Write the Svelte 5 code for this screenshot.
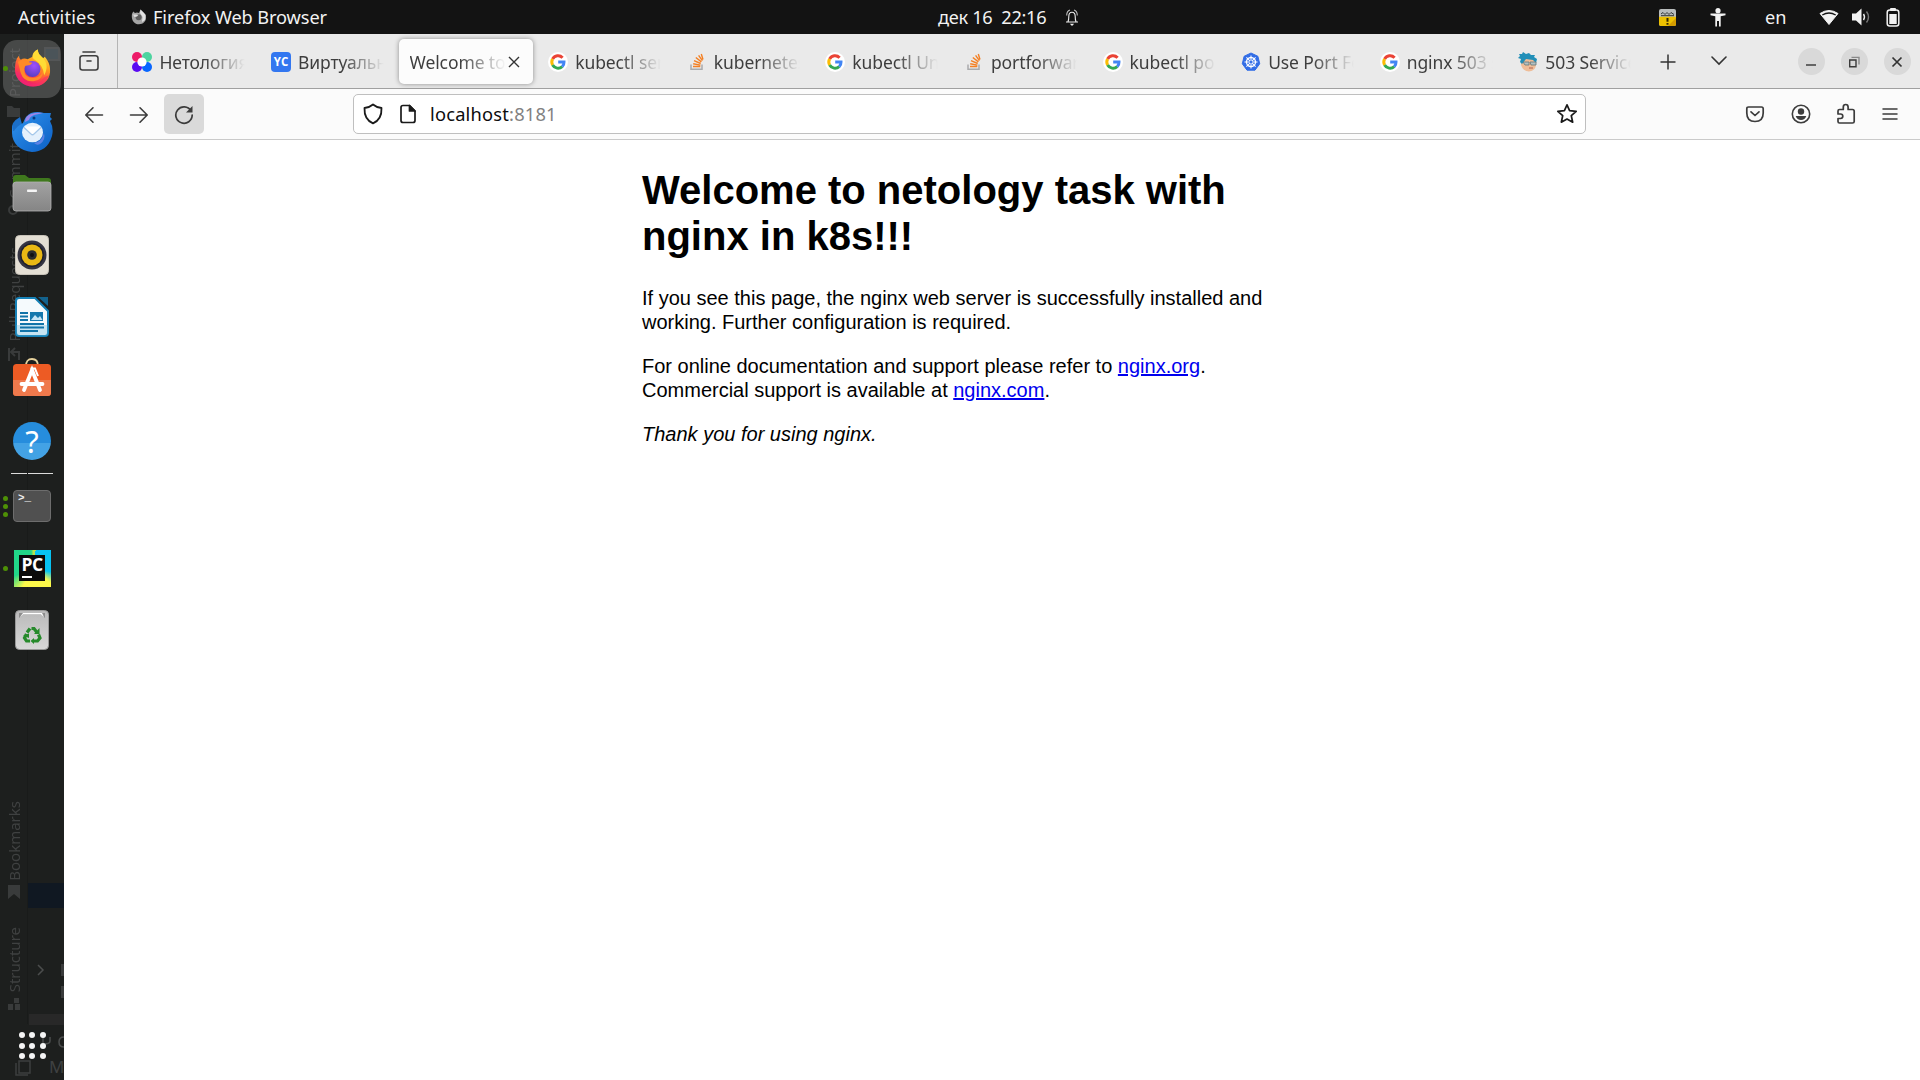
<script>
  const tabs = [
    { kind: 'netology', title: 'Нетология' },
    { kind: 'yc', title: 'Виртуальные' },
    { kind: 'active', title: 'Welcome to n' },
    { kind: 'google', title: 'kubectl serv' },
    { kind: 'stack', title: 'kubernetes' },
    { kind: 'google', title: 'kubectl Una' },
    { kind: 'stack', title: 'portforward' },
    { kind: 'google', title: 'kubectl port' },
    { kind: 'k8s', title: 'Use Port Fo' },
    { kind: 'google', title: 'nginx 503 s' },
    { kind: 'face', title: '503 Service' }
  ];
  const spokes = [0, 45, 90, 135, 180, 225, 270, 315];
  const dots = [0, 1, 2, 3, 4, 5, 6, 7, 8];
</script>

<div class="desktop">
  <header class="topbar">
    <span class="activities">Activities</span>
    <svg class="ff-mini" width="16" height="16" viewBox="0 0 16 16">
      <path d="M1 5 2.2 2.5 4 4 6 3.5 8 4 9.5.5 12.5 3.5 14.5 5.5C16.5 11 13 15.3 8 15.3S0 11 1 5Z" fill="#a5a5a5" />
      <path d="M9.5.5 12.5 3.5 14.5 6 14 11 11 13 11.5 8 9 4Z" fill="#e2e2e2" />
      <circle cx="7.6" cy="8.2" r="3" fill="#5d5d5d" />
      <path d="M2 5.5 7.5 5.7 6 7.4 3.5 8Z" fill="#ddd" />
    </svg>
    <span class="appname">Firefox Web Browser</span>
    <span class="clock">дек 16&nbsp; 22:16</span>
    <svg class="bell" width="12" height="17" viewBox="0 0 12 17" fill="none" stroke="#eee" stroke-width="1.1">
      <path d="M0 13H12M2 12.800Q2.800 11 2.800 7.500 2.800 3.200 6 3.200T9.200 7.500Q9.200 11 10 12.800" />
      <path d="M4 1Q.7 2 .7 6.500M8 1Q11.300 2 11.300 6.500" stroke="#bbb" />
      <path d="M4 14.800H8L6.800 16.500H5.200Z" fill="#eee" stroke="none" />
    </svg>
    <svg class="alert" width="17" height="17" viewBox="0 0 17 17">
      <rect width="17" height="17" rx="2" fill="#b8bcbc" />
      <path d="M2 5 4 3.500 6 5.500 8 3.500 10 5.500 12 3.500 15 5.500M2 6.700H15" stroke="#343838" fill="none" />
      <path d="M0 7.800H17V15Q17 17 15 17H2Q0 17 0 15Z" fill="#edc000" />
      <path d="M9 17 17 9V15Q17 17 15 17Z" fill="#d39b00" />
      <path d="M8.500 9V12.800M8.500 14V15.800" stroke="#332900" stroke-width="2" />
    </svg>
    <svg class="person" width="16" height="19" viewBox="0 0 16 19" fill="#f2f2f2">
      <circle cx="8" cy="2.700" r="2.600" />
      <path d="M.5 5.600H15.500V7.300L10.700 8.200V18.500H9V13H7V18.500H5.300V8.200L.5 7.300Z" />
    </svg>
    <span class="lang">en</span>
    <svg class="wifi" width="20" height="17" viewBox="0 0 20 17">
      <path d="M1 4.500Q10-1.500 19 4.500L10 15.500Z" fill="#f2f2f2" stroke="#f2f2f2" stroke-linejoin="round" />
      <path d="M3.300 6Q10 2 16.700 6" stroke="#131313" stroke-width="1.300" fill="none" />
    </svg>
    <svg class="volume" width="19" height="18" viewBox="0 0 19 18">
      <path d="M0 5.500H4L9.500.5V17.500L4 12.500H0Z" fill="#f2f2f2" />
      <path d="M11.500 6Q13.500 9 11.500 12" fill="none" stroke="#eee" stroke-width="1.400" />
      <path d="M14.500 3.500Q18.500 9 14.500 14.500" fill="none" stroke="#777" stroke-width="1.400" />
    </svg>
    <svg class="battery" width="14" height="19" viewBox="0 0 14 19">
      <rect x="4" y="0" width="6" height="3" rx="1" fill="#f2f2f2" />
      <rect x="1.200" y="2" width="11.600" height="16" rx="2.500" fill="none" stroke="#f2f2f2" stroke-width="1.500" />
      <rect x="3.300" y="6" width="7.400" height="10" fill="#f2f2f2" />
    </svg>
  </header>

  <div class="main">
    <aside class="dock">
      <div class="ghost">
        <i class="g-line"></i><i class="g-sel"></i><i class="g-row"></i><i class="g-tool"></i>
        <span class="g project">Project</span>
        <span class="g commit">Commit</span>
        <span class="g pull">Pull Requests</span>
        <span class="g books">Bookmarks</span>
        <span class="g struct">Structure</span>
        <span class="g-main">M</span>
        <svg class="g-svg" width="64" height="1046" viewBox="0 34 64 1046" fill="#393b3b">
          <path d="M7 106H12L14 108H20V117H7Z" />
          <circle cx="13" cy="210" r="4" fill="none" stroke="#393b3b" stroke-width="2" />
          <path d="M9 348V361M19 360V352H12M15 348 11 352 15 356" fill="none" stroke="#393b3b" stroke-width="2" />
          <path d="M8 885H20V899L14 894 8 899Z" />
          <path d="M8 1004H13V1010H8ZM15 1004H20V1010H15ZM14 998H19V1003H14Z" />
          <path d="M38 965 43 970 38 975" fill="none" stroke="#4b4d4d" stroke-width="1.500" />
          <path d="M61 964H64V976H61ZM61 986H64V998H61Z" />
          <path d="M19 1061H30V1073H19ZM16 1063V1075H28" fill="none" stroke="#3d3f3f" stroke-width="1.500" />
          <path d="M43 1037V1046M50 1037V1041Q50 1044 44 1044M64 1037Q59 1037 59 1042T64 1047" fill="none" stroke="#4b4d4d" stroke-width="1.500" />
        </svg>
      </div>

      <div class="item first">
        <div class="focus"></div>
        <div class="run"><b></b></div>
        <svg width="37" height="39" viewBox="0 0 38 40">
          <defs>
            <linearGradient id="fxA" x1=".85" y1="0" x2=".3" y2="1">
              <stop offset="0" stop-color="#fff044" /><stop offset=".4" stop-color="#ff9a1e" /><stop offset=".7" stop-color="#ff4545" /><stop offset="1" stop-color="#e6107c" />
            </linearGradient>
            <radialGradient id="fxB" cx=".6" cy=".3" r=".7">
              <stop offset="0" stop-color="#a04fff" /><stop offset="1" stop-color="#5a3fc0" />
            </radialGradient>
          </defs>
          <path d="M5 7C5 9 6 10 7 11Q10 9 14 10.500L19 8C19 4.500 21 2 24.500.5 24.500 5 27 6.500 30 9.500L31.500 8C36 13 37.500 18 37 24 36 33 28.500 38.500 19.500 38.500 9.500 38.500 1.500 31 1 21.500 1 15 2 10 5 7Z" fill="url(#fxA)" />
          <path d="M19 8C19 4.500 21 2 24.500.5 24.500 5 27 6.500 30 9.500 34 14 35 20 31 27Q30 16 20 10Z" fill="#ffdc35" />
          <circle cx="19" cy="20.500" r="8.200" fill="url(#fxB)" />
          <path d="M4 13Q8 10 12 12T19 14Q17 17 13.500 17T10.500 22Q11 29 19 29.500T30 22Q30 32 20 33T7 25Z" fill="#ff8a27" />
          <path d="M7 25Q7 32 15 35 24 38 31 29L36 27C34 34 28 38.500 19.500 38.500 9 38.500 2 31 1 22Z" fill="#f5296f" opacity=".55" />
        </svg>
      </div>
      <div class="item tbird">
        <svg width="42" height="42" viewBox="0 0 42 42">
          <defs><linearGradient id="tb" x1="0" y1="0" x2="1" y2="1"><stop offset="0" stop-color="#2f93ee" /><stop offset="1" stop-color="#0c5fc4" /></linearGradient></defs>
          <path d="M9 6 11 13 5 22 1 18Q0 11 9 6Z" fill="#1b6fc9" />
          <path d="M1 13Q1 18 3 20Q6 15 12 12Q15 4 20 2Q26 0 33 2L40 2 39 6 41 8 39 10Q43 17 41 25C38 36 30 41 21 41 9 40 1 32 1 22Z" fill="url(#tb)" />
          <path d="M14 11Q14 5 20 3T32 2L28 3Q19 4 18 9Z" fill="#9a84e8" />
          <circle cx="23" cy="7" r="1.500" fill="#093a80" />
          <ellipse cx="21.500" cy="21.500" rx="10.500" ry="9.800" fill="#e4f0fc" />
          <path d="M13 15.500H30L23 23Q21.500 24.500 20 23Z" fill="#fff" />
          <path d="M12.500 16 20 23Q21.500 24.500 23 23L30.500 16" fill="none" stroke="#a6c8ea" stroke-width="1.200" />
          <path d="M23 32Q31 31 33 22 35 29 29 33 26 35 23 32Z" fill="#7a8aec" opacity=".7" />
        </svg>
      </div>
      <div class="item">
        <svg width="40" height="38" viewBox="0 0 40 38">
          <defs><linearGradient id="fl" x2="0" y2="1"><stop stop-color="#a2a2a2" /><stop offset="1" stop-color="#858585" /></linearGradient></defs>
          <path d="M1 12V4Q1 1 4 1H13L17 4H36Q39 4 39 7V14H1Z" fill="#3f781d" />
          <rect x="1" y="8" width="38" height="29" rx="3" fill="url(#fl)" stroke="#b2b2b2" stroke-width=".8" />
          <rect x="15" y="15.500" width="10" height="2.600" rx=".8" fill="#f5f5f5" />
        </svg>
      </div>
      <div class="item">
        <svg width="34" height="40" viewBox="0 0 34 40">
          <rect x=".5" y=".5" width="33" height="39" rx="4" fill="#e4dfd4" stroke="#c8c3b9" />
          <circle cx="17" cy="20" r="14.500" fill="#343442" /><circle cx="17" cy="20" r="12" fill="#20202c" />
          <circle cx="17" cy="20" r="10.500" fill="#eab814" /><circle cx="17" cy="20" r="4.800" fill="#292b2d" /><circle cx="17" cy="20" r="2" fill="#101010" />
        </svg>
      </div>
      <div class="item">
        <svg width="34" height="40" viewBox="0 0 34 40">
          <path d="M4 1H20L33 14V36Q33 39 30 39H4Q1 39 1 36V4Q1 1 4 1Z" fill="#f5fafd" stroke="#1681b7" stroke-width="2" />
          <path d="M1 28H33V36Q33 39 30 39H4Q1 39 1 36Z" fill="#5bb3db" opacity=".3" />
          <path d="M23 0H33V9Z" fill="#13628d" />
          <path d="M5 16H13M5 19.500H13M5 23H13M5 27H29M5 30.500H29M5 34H23" stroke="#1174a9" stroke-width="1.900" />
          <rect x="15" y="15" width="13" height="9" fill="#1678ad" /><path d="M16 23 20 18 23 21 25 19 27.500 23Z" fill="#c6e5f5" />
        </svg>
      </div>
      <div class="item soft">
        <svg width="40" height="40" viewBox="0 0 40 40">
          <path d="M14 9Q14 2 20 2T26 9" fill="none" stroke="#e6d29d" stroke-width="1.800" />
          <rect x="1" y="7" width="38" height="32" rx="3.500" fill="#ed5b24" /><path d="M1 23H39V35.500Q39 39 35.500 39H4.500Q1 39 1 35.500Z" fill="#ef794c" />
          <path d="M12 33 20 13 28 33M9.500 27H30.500" stroke="#fff" stroke-width="3.800" stroke-linecap="round" fill="none" />
          <path d="M18.500 11.500H23L26 19" stroke="#fff" stroke-width="2" fill="none" />
        </svg>
      </div>
      <div class="item">
        <div class="help">?</div>
      </div>
      <div class="rule"></div>
      <div class="item">
        <div class="run"><b></b><b></b><b></b></div>
        <div class="term"><span>&gt;_</span></div>
      </div>
      <div class="item">
        <div class="run"><b></b></div>
        <div class="pycharm"><div>PC<i></i></div></div>
      </div>
      <div class="item">
        <svg width="34" height="40" viewBox="0 0 34 40">
          <defs><linearGradient id="tr" x2="0" y2="1"><stop stop-color="#b9b9b9" /><stop offset="1" stop-color="#d8d8d8" /></linearGradient></defs>
          <rect x=".5" y=".5" width="33" height="39" rx="4" fill="url(#tr)" stroke="#999" />
          <path d="M4 8V3H30V8L27 5H7Z" fill="#8c8c8c" /><path d="M5 7 8 3H27L29 7 26 4.500H8Z" fill="#fff" />
          <g fill="none" stroke="#268a2b" stroke-width="3.200">
            <path d="M12 22.500 15 18.500H19L22 22.500" stroke-dasharray="5 1.500 8" /><path d="M23.500 24.500 25 28 22.500 31H18" /><path d="M15 31H11.500L9.500 28 11.500 24" />
          </g>
          <path d="M19 28V34L15.500 31ZM8 25.500 14 23.500V28ZM24.500 18V24H19Z" fill="#268a2b" />
        </svg>
      </div>
      <div class="apps">{#each dots as d (d)}<i></i>{/each}</div>
    </aside>

    <section class="browser">
      <div class="tabbar">
        <div class="view">
          <svg width="20" height="20" viewBox="0 0 20 20" fill="none" stroke="#3e3e3e" stroke-width="1.600" stroke-linecap="round">
            <path d="M4 1H16" />
            <rect x="1" y="4.800" width="18" height="14.200" rx="2.500" /><path d="M8 10H12" />
          </svg>
        </div>
        <div class="tabs">
          {#each tabs as tab, i (i)}
            <div class="tab" class:active={tab.kind === 'active'}>
              {#if tab.kind === 'netology'}
                <svg class="fav" width="20" height="20" viewBox="0 0 20 20">
                  <circle cx="5" cy="5" r="5" fill="#ed1b68" /><circle cx="15" cy="5" r="5" fill="#4dd4a0" /><circle cx="5" cy="15" r="5" fill="#5b0cf2" /><circle cx="15" cy="15" r="5" fill="#0866ff" />
                  <circle cx="10" cy="10" r="4.600" fill="#fff" />
                </svg>
              {:else if tab.kind === 'yc'}
                <span class="fav yc">YC</span>
              {:else if tab.kind === 'google'}
                <svg class="fav" width="20" height="20" viewBox="0 0 20 20">
                  <circle cx="10" cy="10" r="10" fill="#fff" />
                  <g fill="none" stroke-width="3">
                    <path d="M14.600 5.700A6.200 6.200 0 0 0 4.600 7" stroke="#ea4335" /><path d="M4.600 7A6.200 6.200 0 0 0 4.600 13" stroke="#fbbc05" />
                    <path d="M4.600 13A6.200 6.200 0 0 0 14.200 14.600" stroke="#34a853" /><path d="M14.200 14.600A6.200 6.200 0 0 0 16 10H10.200" stroke="#4285f4" />
                  </g>
                </svg>
              {:else if tab.kind === 'stack'}
                <svg class="fav" width="20" height="20" viewBox="0 0 20 20" fill="none">
                  <path d="M4 12.500V17.300H15V12.500" stroke="#aaabad" stroke-width="1.500" />
                  <path d="M6 14.500H13.300M6.200 11.700 13.400 13.100M7 8.600 13.700 11.500M8.800 5.500 14.400 9.900M11.600 3.300 15.400 8.700M14.300 2 16 7.500" stroke="#f48024" stroke-width="1.400" />
                </svg>
              {:else if tab.kind === 'k8s'}
                <svg class="fav" width="20" height="20" viewBox="0 0 20 20">
                  <path d="M10 1 16.900 4.300 18.700 11.800 14 18.200H6L1.300 11.800 3.100 4.300Z" fill="#326de6" stroke="#326de6" stroke-linejoin="round" />
                  <circle cx="10" cy="10" r="4.500" stroke="#fff" stroke-width="1.300" fill="none" />
                  {#each spokes as a (a)}<path d="M10 8.800V3.500" transform="rotate({a} 10 10)" stroke="#fff" />{/each}
                </svg>
              {:else if tab.kind === 'face'}
                <svg class="fav" width="20" height="20" viewBox="0 0 20 20">
                  <path d="M3 7Q4 2 13 5 19 6 18 12 18 19 11 19.500 5 19 3 13Z" fill="#efbd98" />
                  <path d="M1 2 4 2 5 0 8 2 11 1 13 3 17 3 16 5 19 7 18 11 15 8 8 7 4 12 2 10 3 7 0 6 2 4Z" fill="#218fb8" />
                  <path d="M5 10H11V13H7ZM12 10H18V13H13Z" fill="#b3c0c1" stroke="#64777a" stroke-width=".8" />
                  <path d="M11 16H15" stroke="#b2614e" />
                </svg>
              {/if}
              <span class="title">{tab.title}</span>
              {#if tab.kind === 'active'}
                <svg class="close" width="12" height="12" viewBox="0 0 12 12" stroke="#333" stroke-width="1.400"><path d="M1 1 11 11M11 1 1 11" /></svg>
              {/if}
            </div>
          {/each}
        </div>
        <svg class="plus" width="16" height="16" viewBox="0 0 16 16" stroke="#333" stroke-width="1.500"><path d="M8 .5V15.500M.5 8H15.500" /></svg>
        <svg class="chev" width="16" height="10" viewBox="0 0 16 10" fill="none" stroke="#333" stroke-width="1.600" stroke-linecap="round"><path d="M1 1 8 8 15 1" /></svg>
        <div class="wbtns">
          <span><svg width="12" height="12" viewBox="0 0 12 12"><path d="M1 9H11" stroke="#333" stroke-width="1.400" /></svg></span>
          <span><svg width="12" height="12" viewBox="0 0 12 12" fill="none" stroke="#3a3a3a" stroke-width="1.400"><path d="M1.700 4H8V10.700H1.700Z" /><path d="M3.500 1.400H11V8.500" stroke="#8a8a8a" /></svg></span>
          <span><svg width="12" height="12" viewBox="0 0 12 12"><path d="M1.500 1.500 10.500 10.500M10.500 1.500 1.500 10.500" stroke="#333" stroke-width="1.700" /></svg></span>
        </div>
      </div>

      <div class="toolbar">
        <svg class="back" width="20" height="18" viewBox="0 0 20 18" fill="none" stroke="#3c3c3c" stroke-width="1.600" stroke-linecap="round" stroke-linejoin="round"><path d="M18.500 9H2M9 1.800 1.800 9 9 16.200" /></svg>
        <svg class="fwd" width="20" height="18" viewBox="0 0 20 18" fill="none" stroke="#3c3c3c" stroke-width="1.600" stroke-linecap="round" stroke-linejoin="round"><path d="M1.500 9H18M11 1.800 18.200 9 11 16.200" /></svg>
        <div class="reload">
          <svg width="20" height="20" viewBox="0 0 20 20"><path d="M17 5.800A8.200 8.200 0 1 0 18.200 10" fill="none" stroke="#3c3c3c" stroke-width="1.700" stroke-linecap="round" /><path d="M18.500 1V7.500H12Z" fill="#3c3c3c" /></svg>
        </div>
        <div class="url">
          <svg class="shield" width="20" height="22" viewBox="0 0 20 22" fill="none" stroke="#1a1a1a" stroke-width="1.800" stroke-linejoin="round"><path d="M10 1.500Q13.500 4.500 18.500 5 19 16.500 10 20.300 1 16.500 1.500 5 6.500 4.500 10 1.500Z" /></svg>
          <svg class="page" width="16" height="20" viewBox="0 0 16 20" fill="none" stroke="#1a1a1a" stroke-width="1.700" stroke-linejoin="round"><path d="M3 1.500H9.500L15 7V16.500Q15 18.500 13 18.500H3Q1 18.500 1 16.500V3.500Q1 1.500 3 1.500Z" /><path d="M9.500 1.500V7H15Z" fill="#1a1a1a" /></svg>
          <span class="addr">localhost<em>:8181</em></span>
          <svg class="star" width="22" height="22" viewBox="0 0 22 22" fill="none" stroke="#1a1a1a" stroke-width="1.700" stroke-linejoin="round"><path d="M11 1.800 13.600 7.700 20.200 8.400 15.300 12.700 16.700 19.200 11 16 5.300 19.200 6.700 12.700 1.800 8.400 8.400 7.700Z" /></svg>
        </div>
        <div class="tools">
          <svg width="20" height="18" viewBox="0 0 20 18" fill="none" stroke="#3c3c3c" stroke-width="1.700" stroke-linecap="round" stroke-linejoin="round"><path d="M3.500 2H16.500Q18.200 2 18.200 3.700V8Q18.200 16.500 10 16.500T1.800 8V3.700Q1.800 2 3.500 2Z" /><path d="M6 6.800 10 10.500 14 6.800" /></svg>
          <svg width="20" height="20" viewBox="0 0 20 20"><circle cx="10" cy="10" r="8.700" fill="none" stroke="#3c3c3c" stroke-width="1.600" /><circle cx="10" cy="7.500" r="3.200" fill="#3c3c3c" /><path d="M4.700 12H15.300Q14 16 10 16T4.700 12Z" fill="#3c3c3c" /></svg>
          <svg class="puzzle" width="20" height="22" viewBox="0 0 20 22" fill="none" stroke="#3c3c3c" stroke-width="1.700" stroke-linejoin="round"><path d="M7.300 6.500V4Q7.300 1.500 9.700 1.500T12.100 4V6.500H16.500Q18.200 6.500 18.200 8.200V18.500Q18.200 20 16.500 20H3.500Q2 20 2 18.500V15.500H4.500Q6.800 15.300 6.800 13.200T4.500 11H2V8Q2 6.500 3.500 6.500Z" /></svg>
          <svg width="16" height="14" viewBox="0 0 16 14" stroke="#3c3c3c" stroke-width="1.500" stroke-linecap="round"><path d="M1 2H15M1 7H15M1 12H15" /></svg>
        </div>
      </div>

      <main>
        <article>
          <h1>Welcome to netology task with nginx in k8s!!!</h1>
          <p>If you see this page, the nginx web server is successfully installed and working. Further configuration is required.</p>
          <p>For online documentation and support please refer to <a href="#org">nginx.org</a>.<br />Commercial support is available at <a href="#com">nginx.com</a>.</p>
          <p><em>Thank you for using nginx.</em></p>
        </article>
      </main>
    </section>
  </div>
</div>

<style>
  :global(body) { margin: 0; overflow: hidden; }
  .desktop { width: 1920px; height: 1080px; display: flex; flex-direction: column; font-family: "Noto Sans", "Open Sans", sans-serif; overflow: hidden; }
  svg { display: block; flex: none; }
  .topbar { height: 34px; flex: none; background: #131313; color: #f2f2f2; display: flex; align-items: center; font-size: 18.200px; white-space: nowrap; }
  .topbar span { flex: none; line-height: 34px; }
  .activities { margin-left: 18px; width: 113px; letter-spacing: .15px; }
  .ff-mini { margin-right: 6px; }
  .appname { width: 785px; letter-spacing: -.1px; }
  .clock { width: 128px; letter-spacing: -.3px; }
  .bell { margin-right: 581px; }
  .alert { margin-right: 34px; }
  .person { margin-right: 39px; }
  .lang { width: 54px; }
  .wifi { margin-right: 13px; }
  .volume { margin-right: 15px; }

  .main { display: flex; flex: 1; min-height: 0; }
  .dock { position: relative; width: 64px; flex: none; background: #1d1f1e; padding-top: 3px; box-sizing: border-box; display: flex; flex-direction: column; align-items: center; overflow: hidden; }
  .item { position: relative; width: 64px; height: 62px; flex: none; display: flex; align-items: center; justify-content: center; }
  .first { margin-bottom: 1px; }
  .tbird svg { margin-top: 2px; }
  .soft svg { margin-bottom: 5px; }
  .item > svg { position: relative; }
  .focus { position: absolute; left: 3px; top: 3px; width: 58px; height: 58px; border-radius: 14px; background: rgba(125, 125, 125, .45); }
  .run { position: absolute; left: 3px; top: 0; height: 62px; display: flex; flex-direction: column; justify-content: center; gap: 3px; }
  .run b { width: 5px; height: 5px; border-radius: 50%; background: #4e9006; }
  .help { width: 38px; height: 38px; border-radius: 50%; background: linear-gradient(#268ddd 55%, #43a2e5 55%); color: #fff; font-size: 31px; line-height: 38px; text-align: center; }
  .rule { width: 42px; height: 1px; margin: 1px 0; flex: none; background: #dcdcdc; }
  .term { width: 38px; height: 32px; box-sizing: border-box; border-radius: 4px; background: #505050; border: 1px solid #6d6d6d; color: #eee; font: bold 11px/12px "Liberation Mono", monospace; padding: 1px 4px; }
  .pycharm { width: 37px; height: 37px; background: conic-gradient(from 10deg, #07c3f2 0 25%, #fcf84a 33% 55%, #21d789 66% 96%, #b5e34d 98%); display: flex; align-items: center; justify-content: center; }
  .pycharm div { width: 26px; height: 26px; background: #0b0b0b; color: #fff; font: bold 17.500px/18px "Open Sans", sans-serif; text-align: center; letter-spacing: -.5px; }
  .pycharm i { display: block; width: 10px; height: 2px; margin: 3px 0 0 3px; background: #fff; }
  .apps { display: grid; grid-template-columns: repeat(3, 6px); gap: 4.500px; margin-top: auto; margin-bottom: 21px; position: relative; }
  .apps i { height: 6px; border-radius: 50%; background: #f5f5f5; }

  .ghost { position: absolute; inset: 0; color: #3f4141; }
  .ghost i { position: absolute; }
  .g-line { left: 27px; top: 0; width: 1px; height: 990px; background: #191b1a; }
  .g-sel { left: 28px; top: 849px; width: 36px; height: 25px; background: #101822; }
  .g-row { left: 29px; top: 980px; width: 35px; height: 11px; background: #282828; }
  .g-tool { left: 44px; top: 13px; width: 12px; height: 10px; background: #24343c; border: 2px solid #33383a; }
  .g { position: absolute; left: 3px; writing-mode: vertical-rl; transform: rotate(180deg); font-size: 15px; line-height: 22px; white-space: nowrap; }
  .project { top: 14px; }
  .commit { top: 109px; }
  .pull { top: 213px; }
  .books { top: 767px; }
  .struct { top: 893px; }
  .g-main { position: absolute; left: 49px; top: 1021px; font-size: 17px; line-height: 24px; }
  .g-svg { position: absolute; left: 0; top: 0; }

  .browser { flex: 1; min-width: 0; display: flex; flex-direction: column; background: #fff; }
  .tabbar { height: 55px; flex: none; box-sizing: border-box; background: #eaeaea; border-bottom: 1px solid #a0a0a0; display: flex; align-items: center; }
  .view { width: 54px; height: 54px; box-sizing: border-box; border-right: 1px solid #b5b5b5; display: flex; align-items: center; padding-left: 15px; }
  .tabs { display: flex; width: 1524.600px; margin-left: 1.400px; height: 54px; flex: none; }
  .tab { width: 138.600px; height: 54px; box-sizing: border-box; padding: 2px 0 0 13px; display: flex; align-items: center; flex: none; }
  .fav { flex: none; margin-right: 7px; }
  .title { width: 86px; overflow: hidden; white-space: nowrap; font-size: 17.500px; line-height: 30px; color: #3e3e3e; letter-spacing: -.1px; -webkit-mask-image: linear-gradient(90deg, #000 52%, transparent); mask-image: linear-gradient(90deg, #000 52%, transparent); }
  .active { width: 133.600px; height: 45px; margin: 5px 2.500px; padding: 1px 0 0 10.500px; background: #fcfcfc; border-radius: 5px; box-shadow: 0 0 5px rgba(0, 0, 0, .4); }
  .active .title { width: 96px; margin-right: 2px; }
  .close { margin-bottom: 1px; }
  .yc { width: 20px; height: 20px; border-radius: 4px; background: #3377f0; color: #fff; font: bold 11.500px/20px "Open Sans", sans-serif; text-align: center; }
  .plus { margin: 1px 0 0 16.100px; }
  .chev { margin-left: 35px; }
  .wbtns { display: flex; gap: 16px; margin: 1px 0 0 70.500px; }
  .wbtns span { width: 27px; height: 27px; border-radius: 50%; background: #d9d9d9; display: flex; align-items: center; justify-content: center; }

  .toolbar { height: 51px; flex: none; box-sizing: border-box; background: #fbfbfb; border-bottom: 1px solid #cacaca; display: flex; align-items: center; }
  .back { margin: 1px 0 0 20px; }
  .fwd { margin: 1px 0 0 25px; }
  .reload { width: 40px; height: 40px; margin-left: 15px; border-radius: 5px; background: #dadada; display: flex; align-items: center; justify-content: center; }
  .reload svg { margin-top: 2px; }
  .url { margin-left: 149px; width: 1233px; height: 40px; box-sizing: border-box; border: 1px solid #bfbfbf; border-radius: 5px; background: #fff; display: flex; align-items: center; }
  .shield { margin-left: 9px; }
  .page { margin-left: 17px; }
  .addr { margin-left: 14px; flex: 1; color: #0c0c0c; font-size: 18.300px; line-height: 30px; letter-spacing: .2px; }
  .addr em { color: #828282; font-style: normal; }
  .star { margin-right: 7px; }
  .tools { margin-left: 159px; display: flex; align-items: center; gap: 26px; }
  .puzzle { margin-left: -1px; }

  main { flex: 1; background: #fff; overflow: hidden; }
  article { width: 700px; margin: 0 auto; padding-top: .1px; font: 20px/24px "Liberation Sans", Arial, sans-serif; color: #000; }
  h1 { margin: 26.800px 0; font-size: 40px; line-height: 46px; }
  p { margin: 0 0 20px; }
  a { color: #0000ee; text-decoration: underline; }
</style>
